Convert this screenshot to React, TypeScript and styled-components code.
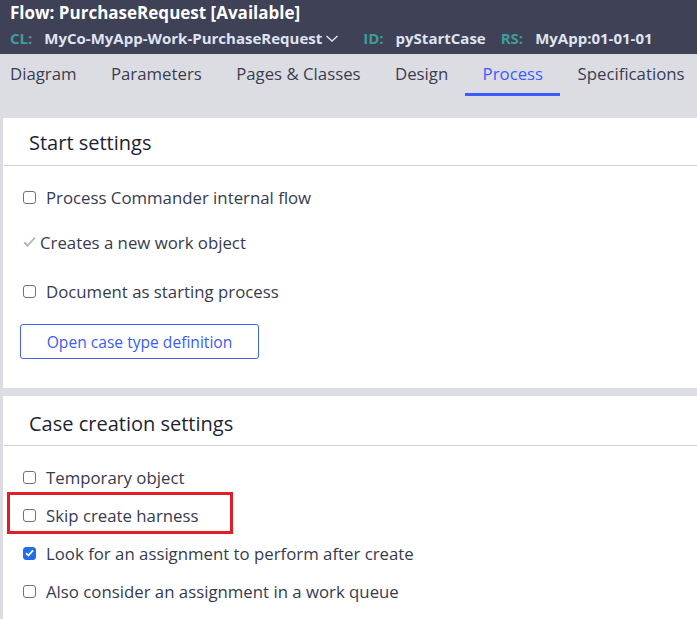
import { FC, ReactNode } from "react";
import styled, { createGlobalStyle } from "styled-components";

const GlobalStyle = createGlobalStyle`
  html, body {
    margin: 0;
    padding: 0;
    background: #dcdde3;
    font-family: "Open Sans", "Noto Sans", sans-serif;
  }
`;

const Header = styled.header`
  height: 54px;
  box-sizing: border-box;
  padding: 2px 10px 0;
  background-color: #3f4156;
`;

const Title = styled.div`
  color: #ffffff;
  font-size: 17px;
  font-weight: 700;
  line-height: 22px;
`;

const Meta = styled.div`
  display: flex;
  align-items: center;
  height: 24px;
  margin-top: 2px;
  font-size: 15px;
  font-weight: 700;
  white-space: nowrap;
`;

const MetaLabel = styled.span`
  color: #3f9e9c;
  margin-right: 12px;
`;

const MetaValue = styled.span<{ $after?: number }>`
  display: inline-flex;
  align-items: center;
  gap: 3px;
  color: #dfe3f2;
  margin-right: ${({ $after = 15 }) => $after}px;
`;

const TabBar = styled.nav`
  display: flex;
  height: 42px;
  margin-bottom: 22px;
  overflow: hidden;
`;

const Tab = styled.div<{ $active?: boolean }>`
  display: flex;
  flex: none;
  align-items: center;
  padding: 0 17.2px;
  white-space: nowrap;
  font-size: 16.8px;
  color: ${({ $active }) => ($active ? "#3b5cfa" : "#3a3d4f")};
  border-bottom: 3px solid ${({ $active }) => ($active ? "#3b5cfa" : "transparent")};
  box-sizing: border-box;

  &:first-child {
    padding-left: 10px;
  }
`;

const Panel = styled.section`
  margin-left: 3px;
  background-color: #ffffff;

  & + & {
    margin-top: 8px;
  }
`;

const PanelHeader = styled.h2<{ $height?: number; $top?: number }>`
  display: flex;
  align-items: center;
  height: ${({ $height = 48 }) => $height}px;
  margin: 0 0 0 1px;
  padding: ${({ $top = 2 }) => $top}px 0 0 25px;
  box-sizing: border-box;
  border-bottom: 1px solid #cfd0da;
  font-size: 20px;
  font-weight: 400;
  color: #1d1f33;
`;

const PanelBody = styled.div<{ $bottom?: number }>`
  padding: 12px 0 ${({ $bottom = 0 }) => $bottom}px 17px;
`;

const Row = styled.label<{ $space?: number; $gap?: number }>`
  position: relative;
  display: flex;
  align-items: center;
  gap: ${({ $gap = 10 }) => $gap}px;
  height: 38px;
  margin-top: ${({ $space = 0 }) => $space}px;
  padding-left: 3px;
  font-size: 16.8px;
  color: #373a4e;
`;

const Box = styled.span<{ $checked?: boolean }>`
  display: inline-flex;
  align-items: center;
  justify-content: center;
  flex: none;
  width: 13px;
  height: 13px;
  box-sizing: border-box;
  border-radius: 3px;
  border: 1px solid ${({ $checked }) => ($checked ? "#1c6fe8" : "#6f717d")};
  background-color: ${({ $checked }) => ($checked ? "#1c6fe8" : "#ffffff")};
`;

const Highlight = styled.span`
  position: absolute;
  left: -13px;
  top: -4px;
  width: 226px;
  height: 42px;
  box-sizing: border-box;
  border: 3px solid #e31e26;
  pointer-events: none;
`;

const OutlineButton = styled.button`
  width: 239px;
  height: 35px;
  margin: 14px 0 0;
  border: 1px solid #3f63f5;
  border-radius: 3px;
  background: #ffffff;
  color: #3b5cf5;
  font-family: inherit;
  font-size: 15.6px;
`;

const Chevron = () => (
  <svg width="14" height="9" viewBox="0 0 14 9" fill="none">
    <path d="M1.5 2 L7 7 L12.5 2" stroke="#dfe3f2" strokeWidth="1.4" />
  </svg>
);

const Check: FC<{ checked?: boolean; children: ReactNode; space?: number; highlight?: boolean }> = ({
  checked,
  children,
  space,
  highlight,
}) => (
  <Row $space={space}>
    <Box $checked={checked}>
      {checked && (
        <svg width="9" height="8" viewBox="0 0 9 8">
          <path d="M1 4.2 L3.4 6.5 L8 1.3" stroke="#ffffff" strokeWidth="1.8" fill="none" />
        </svg>
      )}
    </Box>
    {children}
    {highlight && <Highlight />}
  </Row>
);

const DisabledCheck = () => (
  <svg width="13" height="13" viewBox="0 0 13 13">
    <path d="M0.5 7 L4.5 11 L12.5 2.2 L11.3 1 L4.5 8.4 L2 5.8 Z" fill="#a9aab0" />
    <path d="M1.5 6.5 L4.5 9.3 L11 2.5" stroke="#c8c9ce" strokeWidth="0.8" fill="none" />
  </svg>
);

const tabs = ["Diagram", "Parameters", "Pages & Classes", "Design", "Process", "Specifications"];

export default function App() {
  return (
    <>
      <GlobalStyle />
      <Header>
        <Title>Flow: PurchaseRequest [Available]</Title>
        <Meta>
          <MetaLabel>CL:</MetaLabel>
          <MetaValue $after={24}>
            MyCo-MyApp-Work-PurchaseRequest <Chevron />
          </MetaValue>
          <MetaLabel>ID:</MetaLabel>
          <MetaValue>pyStartCase</MetaValue>
          <MetaLabel>RS:</MetaLabel>
          <MetaValue>MyApp:01-01-01</MetaValue>
        </Meta>
      </Header>
      <TabBar>
        {tabs.map((t) => (
          <Tab key={t} $active={t === "Process"}>
            {t}
          </Tab>
        ))}
      </TabBar>
      <Panel>
        <PanelHeader>Start settings</PanelHeader>
        <PanelBody $bottom={29}>
          <Check>Process Commander internal flow</Check>
          <Row $space={7} $gap={4}>
            <DisabledCheck />
            Creates a new work object
          </Row>
          <Check space={11}>Document as starting process</Check>
          <OutlineButton>Open case type definition</OutlineButton>
        </PanelBody>
      </Panel>
      <Panel>
        <PanelHeader $height={50} $top={5}>Case creation settings</PanelHeader>
        <PanelBody $bottom={10}>
          <Check>Temporary object</Check>
          <Check highlight>Skip create harness</Check>
          <Check checked>Look for an assignment to perform after create</Check>
          <Check>Also consider an assignment in a work queue</Check>
        </PanelBody>
      </Panel>
    </>
  );
}
